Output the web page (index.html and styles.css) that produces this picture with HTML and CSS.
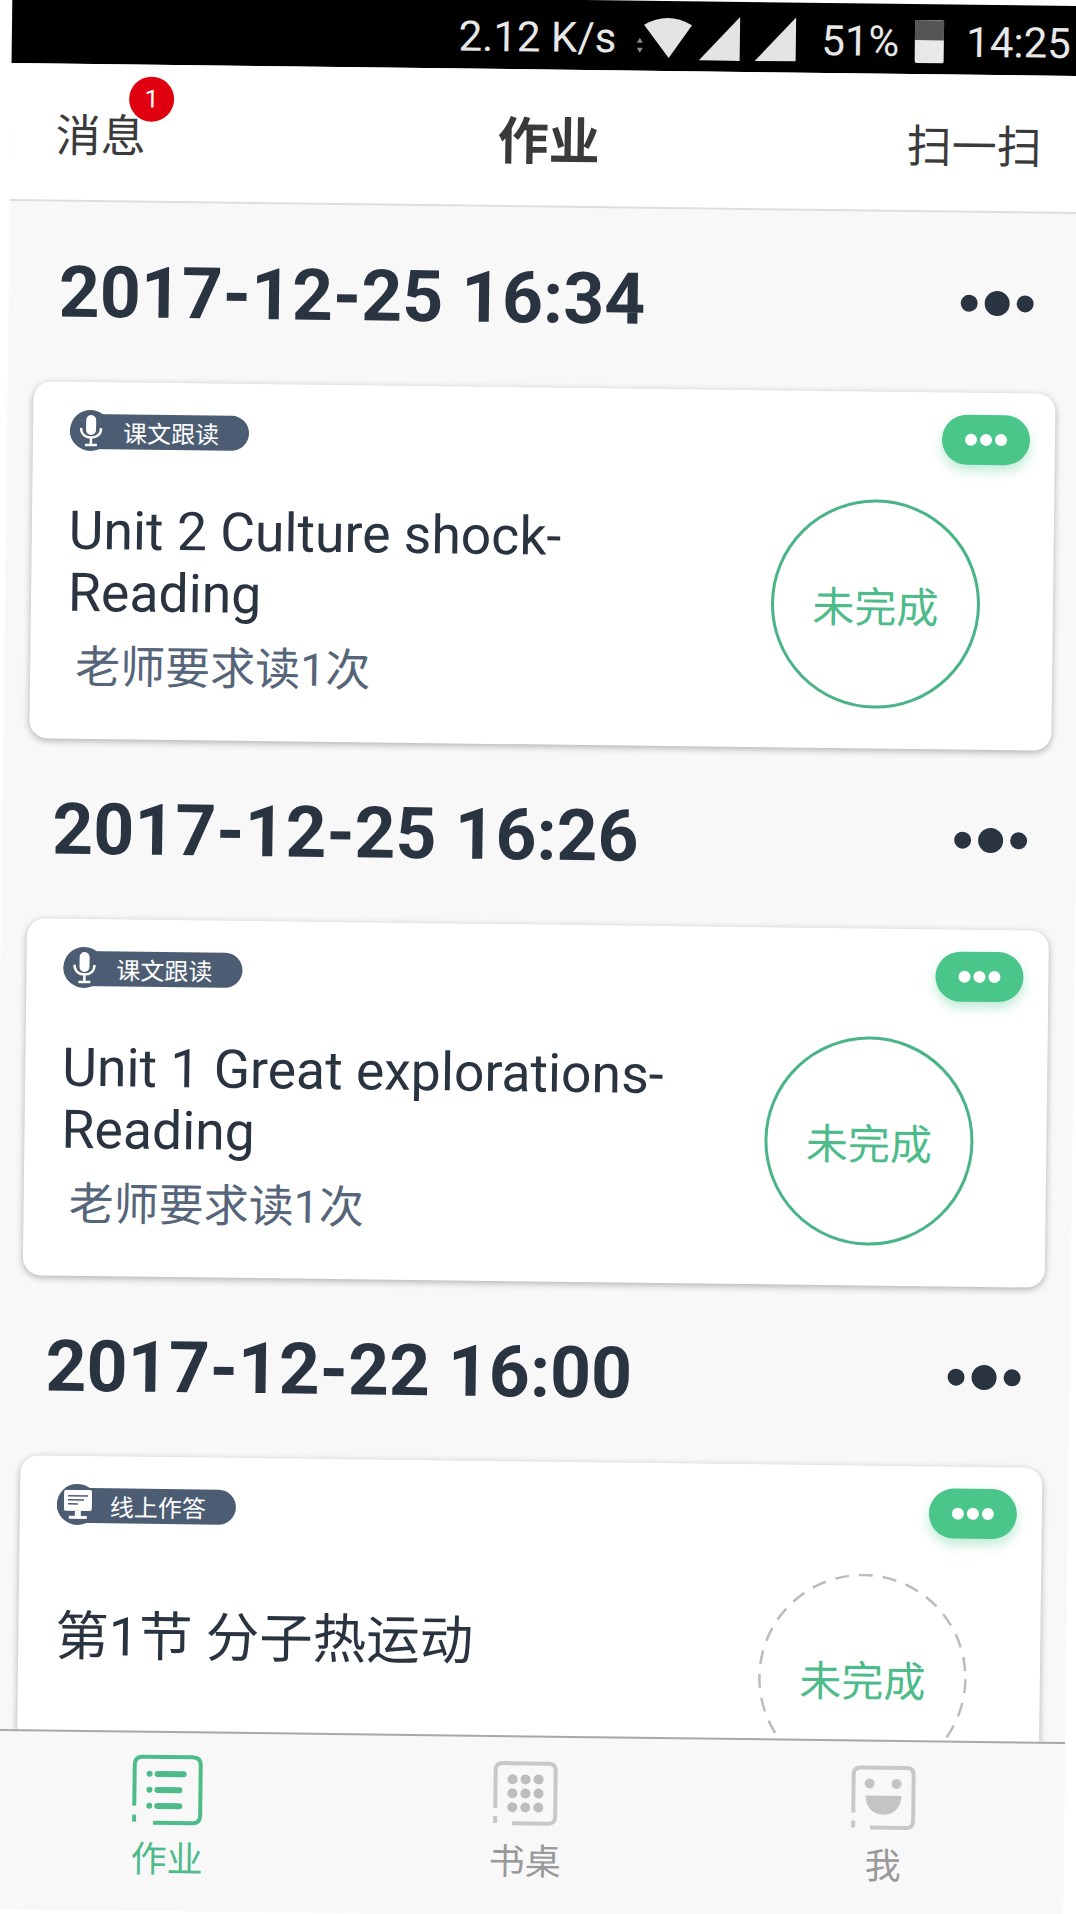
FILE: index.html
```html
<!DOCTYPE html>
<html lang="zh-CN">
<head>
    <meta charset="UTF-8">
    <meta name="viewport" content="width=device-width, initial-scale=1.0">
    <title>作业</title>
    <link rel="stylesheet" href="styles.css">
</head>
<body>
    <div class="phone">
        <div class="statusbar">
            <span class="speed">2.12 K/s</span>
            <svg class="wifi" width="60" height="42" viewBox="0 0 60 42">
                <path fill="#8a8a8a" d="M3 26l3-5 3 5zM3 31l3 5 3-5z"/>
                <path fill="#e4e4e4" d="M10 8Q34-6 58 8L35 41z"/>
            </svg>
            <svg class="signal" width="42" height="44" viewBox="0 0 42 44"><path fill="#e4e4e4" d="M41 0V44H0z"/></svg>
            <svg class="signal" width="42" height="44" viewBox="0 0 42 44"><path fill="#e4e4e4" d="M41 0V44H0z"/></svg>
            <span class="battery-pct">51%</span>
            <span class="battery"><span class="battery-empty"></span></span>
            <span class="clock">14:25</span>
        </div>

        <div class="navbar">
            <div class="nav-left">消息<span class="badge">1</span></div>
            <div class="nav-title">作业</div>
            <div class="nav-right">扫一扫</div>
        </div>

        <div class="content">
            <div class="section-head">
                <span class="date">2017-12-25 16:34</span>
                <span class="more"><i></i><i></i><i></i></span>
            </div>
            <div class="card">
                <div class="card-top">
                    <span class="tag">
                        <span class="tag-icon">
                            <svg width="24" height="32" viewBox="0 0 24 32"><rect x="7" y="0" width="10" height="20" rx="5" fill="#fff"/><path d="M2 13c0 6 4 9.500 10 9.500S22 19 22 13M12 23v6M6 30h12" fill="none" stroke="#fff" stroke-width="2.500"/></svg>
                        </span>
                        课文跟读
                    </span>
                    <span class="menu-btn"><i></i><i></i><i></i></span>
                </div>
                <div class="card-body">
                    <div class="card-text">
                        <div class="card-title">Unit 2 Culture shock-Reading</div>
                        <div class="card-sub">老师要求读1次</div>
                    </div>
                    <div class="state">未完成</div>
                </div>
            </div>

            <div class="section-head">
                <span class="date">2017-12-25 16:26</span>
                <span class="more"><i></i><i></i><i></i></span>
            </div>
            <div class="card">
                <div class="card-top">
                    <span class="tag">
                        <span class="tag-icon">
                            <svg width="24" height="32" viewBox="0 0 24 32"><rect x="7" y="0" width="10" height="20" rx="5" fill="#fff"/><path d="M2 13c0 6 4 9.500 10 9.500S22 19 22 13M12 23v6M6 30h12" fill="none" stroke="#fff" stroke-width="2.500"/></svg>
                        </span>
                        课文跟读
                    </span>
                    <span class="menu-btn"><i></i><i></i><i></i></span>
                </div>
                <div class="card-body">
                    <div class="card-text">
                        <div class="card-title">Unit 1 Great explorations-Reading</div>
                        <div class="card-sub">老师要求读1次</div>
                    </div>
                    <div class="state">未完成</div>
                </div>
            </div>

            <div class="section-head">
                <span class="date">2017-12-22 16:00</span>
                <span class="more"><i></i><i></i><i></i></span>
            </div>
            <div class="card">
                <div class="card-top">
                    <span class="tag">
                        <span class="tag-icon">
                            <svg width="28" height="30" viewBox="0 0 28 30"><path fill="#fff" d="M2 0H26a2 2 0 0 1 2 2V19a2 2 0 0 1-2 2H2a2 2 0 0 1-2-2V2a2 2 0 0 1 2-2zM11 21h6v5h-6zM5 26H23v3H5z"/><path stroke="#4c5d73" stroke-width="1.500" d="M4 6H24M4 10H20M4 14H14"/></svg>
                        </span>
                        线上作答
                    </span>
                    <span class="menu-btn"><i></i><i></i><i></i></span>
                </div>
                <div class="card-body">
                    <div class="card-text card-text-single">
                        <div class="card-title">第1节 分子热运动</div>
                    </div>
                    <div class="state state-dashed">
                        <svg class="state-ring" width="209" height="209" viewBox="0 0 209 209"><circle cx="104.500" cy="104.500" r="103" fill="none" stroke="#bcbcbc" stroke-width="2.500" stroke-dasharray="14 10"/></svg>
                        未完成
                    </div>
                </div>
            </div>
        </div>

        <div class="tabbar">
            <div class="tab tab-active">
                <svg class="tab-icon" width="72" height="72" viewBox="0 0 72 72">
                    <path d="M3 52V11Q3 3 11 3H61Q69 3 69 11V61Q69 69 61 69H22M3 61V68" fill="none" stroke="#4dbb8a" stroke-width="4"/>
                    <path d="M26 20H52M26 36H48M26 52H48" stroke="#4dbb8a" stroke-width="6" stroke-linecap="round"/>
                    <circle cx="18" cy="20" r="3" fill="#4dbb8a"/><circle cx="18" cy="36" r="3" fill="#4dbb8a"/><circle cx="18" cy="52" r="3" fill="#4dbb8a"/>
                </svg>
                <span class="tab-label">作业</span>
            </div>
            <div class="tab">
                <svg class="tab-icon" width="66" height="66" viewBox="0 0 66 66">
                    <path d="M3 48V10Q3 3 10 3H56Q63 3 63 10V56Q63 63 56 63H20M3 56V63" fill="none" stroke="#c8c8c8" stroke-width="4"/>
                    <g fill="#bdbdbd">
                        <circle cx="20" cy="19" r="5"/><circle cx="33" cy="19" r="5"/><circle cx="46" cy="19" r="5"/>
                        <circle cx="20" cy="33" r="5"/><circle cx="33" cy="33" r="5"/><circle cx="46" cy="33" r="5"/>
                        <circle cx="20" cy="47" r="5"/><circle cx="33" cy="47" r="5"/><circle cx="46" cy="47" r="5"/>
                    </g>
                </svg>
                <span class="tab-label">书桌</span>
            </div>
            <div class="tab">
                <svg class="tab-icon" width="66" height="66" viewBox="0 0 66 66">
                    <path d="M3 48V10Q3 3 10 3H56Q63 3 63 10V56Q63 63 56 63H20M3 56V63" fill="none" stroke="#c8c8c8" stroke-width="4"/>
                    <g fill="#c4c4c4">
                        <circle cx="19" cy="19" r="5"/><circle cx="46" cy="19" r="5"/>
                        <path d="M15 31H51C51 43 43 50 33 50S15 43 15 31z"/>
                    </g>
                </svg>
                <span class="tab-label">我</span>
            </div>
        </div>
    </div>
</body>
</html>
```

FILE: styles.css
```css
html, body {
    margin: 0;
    padding: 0;
    height: 100%;
    overflow: hidden;
    background-color: #fff;
}
.phone {
    width: 1074px;
    height: 1916px;
    display: flex;
    flex-direction: column;
    transform: translate(12.4px, -7px) rotate(0.7deg);
    transform-origin: 0 0;
    background-color: #f8f8f8;
    color: #2a3441;
    font-family: Roboto, "Noto Sans CJK SC", sans-serif;
}
.statusbar {
    height: 70px;
    flex: none;
    box-sizing: border-box;
    padding: 4px 15px 0 0;
    display: flex;
    justify-content: flex-end;
    align-items: center;
    background-color: #000;
    color: #e8e8e8;
    font-size: 42px;
}
.speed {
    margin-right: 18px;
}
.wifi {
    margin-right: 5px;
}
.signal {
    margin-right: 14px;
}
.signal + .signal {
    margin-right: 10px;
}
.battery-pct {
    margin: 0 16px 0 14px;
}
.battery {
    width: 29px;
    height: 43px;
    margin-right: 22px;
    background-color: #e8e8e8;
    border-radius: 2px;
}
.battery-empty {
    display: block;
    height: 20px;
    background-color: #555;
}
.navbar {
    height: 138px;
    flex: none;
    box-sizing: border-box;
    padding: 0 43px 0 45px;
    display: grid;
    grid-template-columns: 1fr auto 1fr;
    align-items: center;
    background-color: #fff;
    border-bottom: 2px solid #dedede;
    font-size: 45px;
    color: #3a3a3a;
}
.nav-left {
    position: relative;
    width: 90px;
}
.badge {
    position: absolute;
    left: 73px;
    top: -24px;
    width: 45px;
    height: 45px;
    border-radius: 50%;
    background-color: #e0000f;
    color: #fff;
    font-size: 25px;
    line-height: 45px;
    text-align: center;
}
.nav-title {
    font-size: 51px;
    font-weight: bold;
}
.nav-right {
    justify-self: end;
}
.content {
    flex: 1;
    min-height: 0;
    overflow: hidden;
}
.section-head {
    height: 180px;
    box-sizing: border-box;
    padding: 0 49px 0 50px;
    display: flex;
    justify-content: space-between;
    align-items: center;
}
.date {
    font-size: 71.5px;
    font-weight: bold;
}
.more {
    display: flex;
    align-items: center;
    gap: 7px;
}
.more i {
    width: 17px;
    height: 17px;
    border-radius: 50%;
    background-color: #2a3441;
}
.more i:nth-child(2) {
    width: 25px;
    height: 25px;
}
.card {
    margin: 0 26px;
    height: 357px;
    box-sizing: border-box;
    padding: 22px 25px 0 37px;
    background-color: #fff;
    border-radius: 18px;
    box-shadow: 0 2px 7px rgba(0, 0, 0, 0.3);
}
.card-top {
    display: flex;
    justify-content: space-between;
    align-items: flex-start;
}
.tag {
    height: 35px;
    width: 179px;
    margin-top: 10px;
    display: flex;
    align-items: center;
    position: relative;
    padding-left: 53px;
    box-sizing: border-box;
    border-radius: 18px;
    background-color: #4c5d73;
    color: #fff;
    font-size: 24px;
}
.tag-icon {
    position: absolute;
    left: 0;
    top: -4px;
    width: 41px;
    height: 41px;
    display: flex;
    justify-content: center;
    align-items: center;
    border-radius: 50%;
    background-color: #4c5d73;
}
.menu-btn {
    width: 88px;
    height: 50px;
    display: flex;
    justify-content: center;
    align-items: center;
    gap: 3px;
    border-radius: 25px;
    background-color: #4ac68a;
    box-shadow: 0 6px 12px rgba(74, 198, 138, 0.35);
}
.menu-btn i {
    width: 12px;
    height: 12px;
    border-radius: 50%;
    background-color: #fff;
}
.card-body {
    margin-top: 36px;
    padding-right: 48px;
    display: flex;
    justify-content: space-between;
    align-items: flex-start;
}
.card-text {
    padding-top: 10px;
    max-width: 630px;
}
.card-text-single {
    padding-top: 42px;
}
.card-title {
    font-size: 53.5px;
    line-height: 62px;
}
.card-sub {
    margin: 14px 0 0 8px;
    font-size: 45px;
    line-height: 60px;
    color: #56657a;
}
.state {
    width: 209px;
    height: 209px;
    flex: none;
    box-sizing: border-box;
    display: flex;
    justify-content: center;
    align-items: center;
    position: relative;
    border: 3px solid #49b486;
    border-radius: 50%;
    color: #4dbb8a;
    font-size: 42px;
}
.state-dashed {
    border: none;
}
.state-ring {
    position: absolute;
    left: 0;
    top: 0;
}
.tabbar {
    height: 180px;
    flex: none;
    box-sizing: border-box;
    padding-left: 117px;
    display: flex;
    gap: 238px;
    background-color: #f8f8f8;
    border-top: 2px solid #a8a8a8;
}
.tab {
    width: 120px;
    display: flex;
    flex-direction: column;
    align-items: center;
    padding-top: 23px;
    color: #999;
    font-size: 36px;
}
.tab-active {
    color: #4dbb8a;
    padding-top: 21px;
}
.tab-label {
    margin-top: 14px;
    line-height: 44px;
}
.tab-active .tab-label {
    margin-top: 12px;
}
```
